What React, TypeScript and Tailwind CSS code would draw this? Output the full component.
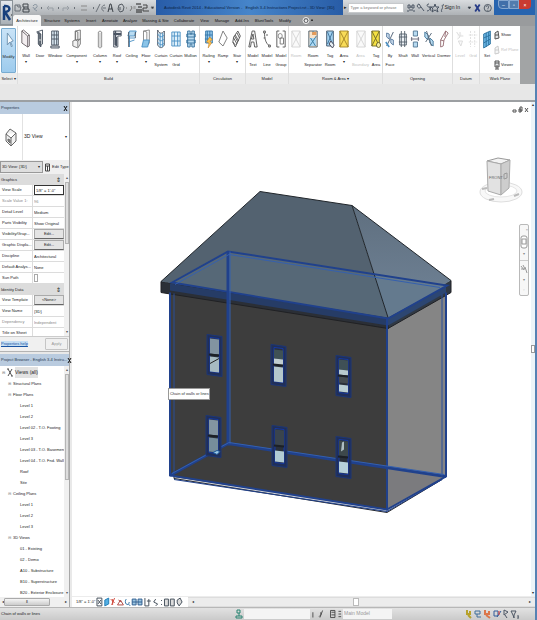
import { useState } from 'react'
import type { ReactNode } from 'react'
import clsx from 'clsx'

type Tool = {
  label: string
  icon: string
  width: string
  disabled?: boolean
  menu?: boolean
}

type Panel = { title: string; tools: Tool[]; className?: string }

const dark = '#4b5563'
const blue = '#4a90c4'
const pale = '#b9dcf2'

const toolIcons: Record<string, ReactNode> = {
  modify: <path d="M4 3v12l3-3 2 5 1-1-2-4 3-1z" fill="#f4f9fd" stroke="#6e93b0" />,
  wall: <path d="M1 2l7 5v11l-7-4zM8 7l2-1v11l-2 1M1 2l2-1 7 5" fill="#f3eef0" stroke="#6b6468" />,
  door: <><path d="M2 3l7-2v14l-3 2V4z" fill="#fff" stroke={dark} /><path d="M3 4l4 1v13l-3-3V5z" fill="#69717a" stroke={dark} /><path d="M5 11h2" stroke="#fff" /></>,
  window: <><path d="M1 17h10v2H1z" fill="#d1d5db" stroke={dark} /><path d="M2 2h8v14H2zM5 2v14M8 2v14M2 6h8M2 10h8" fill="#dcebf5" stroke={dark} /></>,
  component: <><path d="M4 2l6-1v14l-3 4-6-2v-5l3-1z" fill="#f2f2f2" stroke="#777" /><path d="M4 2v9l3 1v6M4 11l6-1M7 12l3-2M4 2l3 1v8" stroke="#777" fill="none" /></>,
  column: <><path d="M4 3l2-1 2 1v15l-2 1-2-1z" fill="#f5f5f5" stroke="#888" /><path d="M6 4v15" stroke="#bbb" /></>,
  roof: <><path d="M2 2h9v5H7v11H2z" fill="#e5e7eb" stroke={dark} /><path d="M4 2v14M2 5h9M5 8v9" stroke={dark} strokeWidth="2" /></>,
  ceiling: <><path d="M3 2h8l-2 5H1zM3 7v11M1 9h9M2 13l7-2" fill={pale} stroke={blue} /><path d="M2 3v15M10 3v6" stroke={dark} fill="none" /></>,
  floor: <><path d="M3 2l7-1v13l-3 3V3z" fill="#fff" stroke="#888" /><path d="M3 11h7l-2 7H1z" fill="#8bc4e8" stroke={blue} /><path d="M3 2v9" stroke="#888" /></>,
  curtain: <><path d="M2 1c2 4 5 4 8 1v14c-3 4-6 3-8 0z" fill="#e3f1fa" stroke={dark} /><path d="M2 5c3 4 5 3 8 1M2 9c3 4 5 3 8 1M2 13c3 4 5 3 8 1M5 4v14M8 4v14" fill="none" stroke={blue} /></>,
  grid: <path d="M1 3h10v14H1zM4 3v14M8 3v14M1 7h10M1 12h10" fill="#e4f3fc" stroke={blue} />,
  mullion: <path d="M2 2h3v3h2V2h3v16H7v-3H5v3H2zM1 5h10v3H1zM1 11h10v3H1z" fill={pale} stroke="#36719d" />,
  railing: <><path d="M2 2h8v12H2zM4 2v12M7 2v12M1 6h9M1 10h9" fill="#9acbed" stroke="#3275a8" /><path d="M7 8l3 3-3 1 2 2-4 5 1-5-3-1z" fill="#ffc34c" stroke="#c5822b" strokeWidth=".6" /></>,
  ramp: <path d="M6 2l5 7-5 8-5-4z" fill="#fff" stroke="#777" />,
  stair: <path d="M2 8l5-6 3 5-6 11-3-5zM4 6l4 6M6 4l3 5M2 9l4 6M1 13l3 3M3 7l4 6" fill="#fff" stroke="#555" />,
  text: <path d="M1 18L5 2h3l3 16H8l-1-5H4l-1 5zM4 10h3L6 5z" fill="#f7f7f7" stroke="#555" />,
  line: <><path d="M3 3c0 6 1 11 6 14" fill="none" stroke="#555" /><path d="M2 2h2v2H2zM8 16h2v2H8zM2 9h2M6 5v2" fill="#fff" stroke="#555" /></>,
  group: <><path d="M4 2H1v16h3M8 2h3v16H8" fill="none" stroke="#555" /><circle cx="5" cy="7" r="2.5" fill="none" stroke="#888" /><path d="M5 9h4v6H5z" fill="none" stroke="#777" /></>,
  room: <path d="M1 2h10v16H1zM1 2l10 16M11 2L1 18" fill="#f1f1f1" stroke="#777" />,
  separator: <><path d="M1 2h10v16H1z" fill="#f8e3ca" stroke="#4d5c68" /><path d="M2 9h8v8H2z" fill="#abd8f5" /><path d="M2 17l8-10M3 9l6 8M6 2v4" stroke="#38799e" /><path d="M5 3h5v3H5z" fill="#e59b58" /></>,
  tag: <><path d="M2 2h8v15H2z" fill="#a5d4f2" stroke="#44586b" /><path d="M3 3l6 12M9 3L3 15" stroke="#3a6d97" /><path d="M7 12l4 4-2 3-4-4z" fill="#e7f0f5" stroke="#445" /></>,
  area: <path d="M1 2h10v16H1zM1 2l10 16M11 2L1 18" fill="#f9dc58" stroke="#a48528" />,
  tagarea: <><path d="M1 2h9v15H1zM1 2l9 15M10 2L1 17" fill="#f5e142" stroke="#716a2b" /><circle cx="9" cy="16" r="2.5" fill="#f6eda0" stroke="#676230" /></>,
  byface: <><path d="M2 17L10 3" stroke="#4c5d72" /><path d="M2 4l3 1v5L2 8zM7 10l3 1v5l-3-2z" fill="#d6e6f5" stroke="#53779d" /><path d="M1 13l4 5" stroke={blue} strokeWidth="2" /></>,
  shaft: <path d="M2 5h8v11H2zM4 2v16M8 2v16M1 8h10M1 13h10" fill="#eef3f7" stroke="#55616c" />,
  opening: <><path d="M4 2h5v5H4zM4 13h5v5H4z" fill="#b8dbf1" stroke="#567995" /><path d="M1 10h10M2 8v4M10 8v4" stroke="#667" /></>,
  vertical: <><path d="M1 3l4 3v5L1 8zM7 9l4 3v5l-4-3z" fill="#b8dbf1" stroke="#45779a" /><path d="M2 13l7-9M3 2l6 15" stroke="#567" /></>,
  dormer: <path d="M2 18V11l6-9 3 2-5 7-1 6zM8 2L7 8M2 11l4 1" fill="#fff" stroke="#966d73" />,
  level: <path d="M2 3l4 5-3 2M4 12h5l-2 5zM6 3v4h4" fill="#f1f1f1" stroke="#888" />,
  gridline: <path d="M3 2v16M8 2v16M1 6h10M1 13h10" fill="none" stroke="#999" strokeDasharray="2 1" />,
  set: <path d="M2 5l8-3v13l-8 4zM5 4v14M8 3v13M2 9l8-3M2 14l8-4" fill="#6db8e7" stroke="#2c719e" />,
}

const panels: Panel[] = [
  {
    title: 'Build',
    className: 'px-px',
    tools: [
      { label: 'Wall', icon: 'wall', width: 'w-3.5', menu: true },
      { label: 'Door', icon: 'door', width: 'w-3.5' },
      { label: 'Window', icon: 'window', width: 'w-4' },
      { label: 'Component', icon: 'component', width: 'w-[27px]', menu: true },
      { label: 'Column', icon: 'column', width: 'w-5', menu: true },
      { label: 'Roof', icon: 'roof', width: 'w-3.5', menu: true },
      { label: 'Ceiling', icon: 'ceiling', width: 'w-[15px]' },
      { label: 'Floor', icon: 'floor', width: 'w-3.5', menu: true },
      { label: 'Curtain System', icon: 'curtain', width: 'w-4' },
      { label: 'Curtain Grid', icon: 'grid', width: 'w-3.5' },
      { label: 'Mullion', icon: 'mullion', width: 'w-[15px]' },
    ],
  },
  {
    title: 'Circulation',
    className: 'px-px',
    tools: [
      { label: 'Railing', icon: 'railing', width: 'w-[15px]', menu: true },
      { label: 'Ramp', icon: 'ramp', width: 'w-3.5' },
      { label: 'Stair', icon: 'stair', width: 'w-3.5', menu: true },
    ],
  },
  {
    title: 'Model',
    tools: [
      { label: 'Model Text', icon: 'text', width: 'w-3.5' },
      { label: 'Model Line', icon: 'line', width: 'w-3.5' },
      { label: 'Model Group', icon: 'group', width: 'w-3.5' },
    ],
  },
  {
    title: 'Room & Area ▾',
    tools: [
      { label: 'Room', icon: 'room', width: 'w-3.5', disabled: true },
      { label: 'Room Separator', icon: 'separator', width: 'w-5' },
      { label: 'Tag Room', icon: 'tag', width: 'w-3.5' },
      { label: 'Area', icon: 'area', width: 'w-3.5', menu: true },
      { label: 'Area Boundary', icon: 'room', width: 'w-[19px]', disabled: true },
      { label: 'Tag Area', icon: 'tagarea', width: 'w-3' },
    ],
  },
  {
    title: 'Opening',
    tools: [
      { label: 'By Face', icon: 'byface', width: 'w-3.5' },
      { label: 'Shaft', icon: 'shaft', width: 'w-3' },
      { label: 'Wall', icon: 'opening', width: 'w-3' },
      { label: 'Vertical', icon: 'vertical', width: 'w-[15px]' },
      { label: 'Dormer', icon: 'dormer', width: 'w-4' },
    ],
  },
  {
    title: 'Datum',
    tools: [
      { label: 'Level', icon: 'level', width: 'w-3.5', disabled: true },
      { label: 'Grid', icon: 'gridline', width: 'w-3', disabled: true },
    ],
  },
]

const tabs = [
  { label: 'Structure', width: 'w-5' },
  { label: 'Systems', width: 'w-5' },
  { label: 'Insert', width: 'w-[18px]' },
  { label: 'Annotate', width: 'w-5' },
  { label: 'Analyze', width: 'w-5' },
  { label: 'Massing & Site', width: 'w-[31px]' },
  { label: 'Collaborate', width: 'w-[26px]' },
  { label: 'View', width: 'w-[15px]' },
  { label: 'Manage', width: 'w-5' },
  { label: 'Add-Ins', width: 'w-5' },
  { label: 'BluntTools', width: 'w-6' },
  { label: 'Modify', width: 'w-[18px]' },
]

const tree = [
  { label: 'Structural Plans', depth: 1 },
  { label: 'Floor Plans', depth: 1 },
  { label: 'Level 1', depth: 2 },
  { label: 'Level 2', depth: 2 },
  { label: 'Level 02 - T.O. Footing', depth: 2 },
  { label: 'Level 3', depth: 2 },
  { label: 'Level 03 - T.O. Basement', depth: 2 },
  { label: 'Level 04 - T.O. Fnd. Wall', depth: 2 },
  { label: 'Roof', depth: 2 },
  { label: 'Site', depth: 2 },
  { label: 'Ceiling Plans', depth: 1 },
  { label: 'Level 1', depth: 2 },
  { label: 'Level 2', depth: 2 },
  { label: 'Level 3', depth: 2 },
  { label: '3D Views', depth: 1 },
  { label: '01 - Existing', depth: 2 },
  { label: '02 - Demo', depth: 2 },
  { label: 'A10 - Substructure', depth: 2 },
  { label: 'B10 - Superstructure', depth: 2 },
  { label: 'B20 - Exterior Enclosure', depth: 2 },
]

function ToolIcon({ name, className }: { name: string; className?: string }) {
  return (
    <svg viewBox="0 0 12 20" preserveAspectRatio="none" className={clsx('h-5 w-2.5 shrink-0', className)} fill="none" strokeWidth="1">
      {toolIcons[name]}
    </svg>
  )
}

function QuickAccess() {
  return (
    <svg viewBox="0 0 140 12" className="h-3 w-[140px] shrink-0" fill="none" stroke="#6b7178" aria-label="Quick access toolbar">
      <path d="M1 9V3h2l1 2h3l-1 4zM3 3h3v2" />
      <path d="M9 2h5v3H9zM9 7h6v3H9zM10 5v2M14 5v2" stroke="#41464d" />
      <path d="M19 4c2-3 5-1 4 1s-4 2-4 0M20 7l3 2" stroke="#8995a0" />
      <path d="M27 6h1M44 6h1M60 6h1M79 6h1M97 6h1" strokeWidth="2" />
      <path d="M35 4l-2 2 2 2M33 6h6v3M53 4l2 2-2 2M55 6h-6v3" stroke="#989ea5" />
      <path d="M67 4h6M67 8h6" stroke="#888" />
      <path d="M82 10l4-8M91 3c-4 0-4 6-1 6M89 6h3" />
      <path d="M94 10l2-8h1l2 8M95 7h3" stroke="#3f444a" />
      <path d="M105 3l3-1 2 3-1 4-3 1-2-3zM106 5v3" stroke="#555b62" />
      <path d="M112 6h1M117 4l1 2-2 3" stroke="#777" />
      <path d="M122 2h5M124 5h4M122 8h6M122 10h6" stroke="#222" />
      <path d="M120 4v3M121 4v3" stroke="#999" />
      <path d="M129 3h4v3h-4v3h6" stroke="#444" />
      <path d="M137 5h3l-1.500 2z" fill="#111" />
    </svg>
  )
}

function TitleBar() {
  return (
    <header className="flex h-[15px] items-center bg-linear-to-b from-[#d9dcdf] to-[#aeb2b6]">
      <span className="w-3.5 shrink-0" />
      <QuickAccess />
      <div className="ml-0.5 flex h-full min-w-0 flex-1 items-center overflow-hidden bg-linear-to-r from-[#285ca8] via-[#4685ca] to-[#285ca6]">
        <h1 className="pl-2 text-[4px] whitespace-nowrap text-[#0c2344]">
          Autodesk Revit 2014 - Educational Version - &nbsp; English 3-4 Instructions Project.rvt - 3D View: {'{3D}'}
        </h1>
      </div>
      <div className="flex h-full shrink-0 items-center">
        <span className="px-px text-[5px]">▸</span>
        <input
          aria-label="Search help"
          placeholder="Type a keyword or phrase"
          className="h-2.5 w-[56px] border border-[#c6c9cc] bg-white px-px text-[4px] outline-none placeholder:text-[#777]"
        />
        <svg viewBox="0 0 40 12" className="h-3 w-10" fill="none" stroke="#4b5563">
          <path d="M4 3h2v3H4zM8 3h2v3H8zM4 8v2M10 8v2M6 5h2M5 8h4" />
          <path d="M15 2a2 2 0 102 3l3 4M15 2l2 3" />
          <path d="M25 2c-3 0-2 3 0 3s1 4-2 4M26 4l1 5" />
          <path d="M31 2l1 3h3l-2 2 1 3-3-2-3 2 1-3-2-2h3z" />
          <path d="M38 10c-2-2 2-4 0-6 1-2 2-2 2 0" />
        </svg>
        <button className="text-[5px]">Sign In</button>
        <svg viewBox="0 0 38 12" className="h-3 w-[34px]" fill="none" stroke="#47515d">
          <path d="M9 5h3l-1.500 2z" fill="#222" />
          <path d="M17 2l5 8M22 2l-5 8" stroke="#273c87" strokeWidth="2" />
          <circle cx="31" cy="6" r="4" /><path d="M29 5c0-2 4-2 3 0l-1 2M31 8v1" />
        </svg>
        <div className="flex h-full items-start bg-[#2764af] px-1 text-[5px] leading-[9px] text-white">
          <button aria-label="Minimize" className="h-[9px] w-[11px] rounded-bl-sm border border-[#86a7cf] bg-[#416fa9] leading-[6px]">–</button>
          <button aria-label="Restore" className="h-[9px] w-[10px] border border-[#86a7cf] bg-[#527cae] leading-[6px]">▫</button>
          <button aria-label="Close" className="h-[9px] w-[12px] rounded-br-sm bg-[#c93b31] leading-[8px]">×</button>
        </div>
      </div>
    </header>
  )
}

function RibbonTabs() {
  return (
    <nav className="flex h-[11px] items-stretch bg-[#999b9d] pl-[13px] text-[4px]">
      <button className="mr-px w-7 shrink-0 rounded-t-[2px] bg-[#f7f7f7]">Architecture</button>
      {tabs.map((tab) => (
        <button key={tab.label} className={clsx('shrink-0 whitespace-nowrap text-[#111]', tab.width)}>
          {tab.label}
        </button>
      ))}
      <svg viewBox="0 0 12 11" className="ml-2 h-[11px] w-3" fill="none" stroke="#f3f3f3">
        <circle cx="4" cy="5.500" r="3" fill="#6b6d70" /><path d="M3 5h2l-1 2z" fill="#fff" /><path d="M9 5h2l-1 1z" stroke="#333" />
      </svg>
    </nav>
  )
}

function RibbonButton({ tool }: { tool: Tool }) {
  return (
    <button disabled={tool.disabled} className={clsx('flex shrink-0 flex-col items-center pt-[3px]', tool.width, tool.disabled && 'opacity-30')}>
      <ToolIcon name={tool.icon} />
      <span className="mt-0.5 text-center leading-[9px]">{tool.label}</span>
      {tool.menu && <span className="text-[4px] leading-[4px]">▾</span>}
    </button>
  )
}

function PanelTitle({ children }: { children: ReactNode }) {
  return <h2 className="mt-auto h-[11px] bg-[#ececec] text-center leading-[11px] whitespace-nowrap">{children}</h2>
}

function Ribbon() {
  return (
    <section className="flex h-[58px] bg-[#a2a4a5] text-[4px] text-[#222]">
      <div className="flex min-w-0 bg-white">
        <div className="flex w-[18px] shrink-0 flex-col border-r border-[#dedede]">
          <button className="mx-px mt-[2px] flex h-[45px] flex-col items-center rounded-[1px] border border-[#79abd0] bg-linear-to-b from-[#c9e3f7] to-[#9dcbed] pt-px">
            <ToolIcon name="modify" />
            <span className="mt-0.5 leading-[9px]">Modify</span>
          </button>
          <PanelTitle>Select ▾</PanelTitle>
        </div>
        {panels.map((panel) => (
          <div key={panel.title} className="flex shrink-0 flex-col border-r border-[#dedede]">
            <div className={clsx('flex flex-1', panel.className)}>
              {panel.tools.map((tool, i) => (
                <RibbonButton key={i} tool={tool} />
              ))}
            </div>
            <PanelTitle>{panel.title}</PanelTitle>
          </div>
        ))}
        <div className="flex shrink-0 flex-col">
          <div className="flex flex-1">
            <RibbonButton tool={{ label: 'Set', icon: 'set', width: 'w-3.5' }} />
            <div className="flex w-[26px] flex-col justify-around py-px">
              {['Show', 'Ref Plane', 'Viewer'].map((label, i) => (
                <button key={label} disabled={i === 1} className={clsx('flex items-center gap-px whitespace-nowrap', i === 1 && 'opacity-30')}>
                  <svg viewBox="0 0 6 10" className="h-2.5 w-1.5 shrink-0" fill="#e3e6e8" stroke="#555">
                    <path d={i === 2 ? 'M1 1h4v6H1zM1 3h4M3 5v4M1 9h4' : 'M1 3l3-2 1 7-4 1zM1 5h3'} />
                  </svg>
                  {label}
                </button>
              ))}
            </div>
          </div>
          <PanelTitle>Work Plane</PanelTitle>
        </div>
      </div>
    </section>
  )
}

function PaletteHeader({ title }: { title: string }) {
  return (
    <div className="flex h-3 shrink-0 items-center justify-between bg-[#b9cbdf] px-px text-[4px] text-[#26384c]">
      <h2 className="whitespace-nowrap">{title}</h2>
      <button aria-label={`Close ${title}`}>
        <svg viewBox="0 0 5 7" className="h-[7px] w-[5px]" stroke="#111"><path d="M1 1l3 5M4 1L1 6" /></svg>
      </button>
    </div>
  )
}

function PropertyRow({ label, id, muted, children }: { label: string; id: string; muted?: boolean; children: ReactNode }) {
  return (
    <div className={clsx('grid h-[11px] shrink-0 grid-cols-[1fr_1fr] items-center border-b border-[#dcdcdc]', muted && 'text-[#888]')}>
      <label htmlFor={id} className="pl-0.5 whitespace-nowrap">{label}</label>
      <div className="flex h-full min-w-0 items-center border-l border-[#dcdcdc] pl-px">{children}</div>
    </div>
  )
}

function TextValue({ id, value, boxed }: { id: string; value: string; boxed?: boolean }) {
  return <input id={id} defaultValue={value} className={clsx('h-full w-full min-w-0 bg-transparent outline-none', boxed && 'border border-[#333] px-px')} />
}

function EditValue({ id, children }: { id: string; children: ReactNode }) {
  return <button id={id} className="h-2.5 w-full border border-[#aaa] border-b-[#666] bg-[#e4e4e4] text-center leading-[8px]">{children}</button>
}

function GroupHeader({ children }: { children: ReactNode }) {
  return (
    <div className="flex h-[11px] shrink-0 items-center justify-between bg-[#dcdcdc] px-px">
      <h3>{children}</h3>
      <span className="pr-0.5 text-[6px] leading-none">⇕</span>
    </div>
  )
}

function ScrollBar({ thumb }: { thumb: string }) {
  return (
    <div className="flex w-[5px] shrink-0 flex-col items-center justify-between bg-[#f0f0f0] text-[4px] leading-[8px] text-[#555]">
      <span>▴</span>
      <div className={clsx('mb-auto w-1 border border-[#b5b5b5] bg-[#dedede]', thumb)} />
      <span>▾</span>
    </div>
  )
}

function Properties() {
  const [sunPath, setSunPath] = useState(false)
  return (
    <section className="flex h-[250px] shrink-0 flex-col border-b border-[#b3b3b3] text-[4px]">
      <PaletteHeader title="Properties" />
      <div className="flex h-[46px] shrink-0 items-center bg-white">
        <div className="flex h-full w-[23px] items-center justify-center border-r border-[#e2e2e2]">
          <svg viewBox="0 0 12 20" className="h-5 w-3" fill="#f0f0f0" stroke="#666">
            <path d="M1 7l4-5 6 4v8l-5 5-5-5zM1 7l5 4 5-5M6 11v8" />
            <path d="M3 12v2l2 2v-3z" fill="#999" />
          </svg>
        </div>
        <span className="flex-1 pl-px text-[5px]">3D View</span>
        <span className="pr-0.5">▾</span>
      </div>
      <div className="flex h-[14px] shrink-0 items-center bg-[#f0f0f0]">
        <div className="flex h-3 w-[43px] items-center border border-[#999] bg-[#dedede]">
          <select aria-label="View type" className="h-full w-full appearance-none bg-transparent pl-px">
            <option>3D View: {'{3D}'}</option>
          </select>
          <span className="pr-0.5">▾</span>
        </div>
        <button className="ml-0.5 flex items-center gap-0.5 whitespace-nowrap">
          <svg viewBox="0 0 5 9" className="h-[9px] w-[5px]" fill="#fff" stroke="#444"><path d="M.5 1h4v7h-4zM.5 3h4M2.500 3v5" /></svg>
          Edit Type
        </button>
      </div>
      <div className="flex min-h-0 flex-1 overflow-hidden bg-white">
        <div className="flex min-w-0 flex-1 flex-col overflow-hidden">
          <GroupHeader>Graphics</GroupHeader>
          <PropertyRow label="View Scale" id="scale"><TextValue id="scale" value={'1/8" = 1\'-0"'} boxed /></PropertyRow>
          <PropertyRow label="Scale Value  1:" id="scale-value" muted><TextValue id="scale-value" value="96" /></PropertyRow>
          <PropertyRow label="Detail Level" id="detail"><TextValue id="detail" value="Medium" /></PropertyRow>
          <PropertyRow label="Parts Visibility" id="parts"><TextValue id="parts" value="Show Original" /></PropertyRow>
          <PropertyRow label="Visibility/Grap..." id="visibility"><EditValue id="visibility">Edit...</EditValue></PropertyRow>
          <PropertyRow label="Graphic Displa..." id="display"><EditValue id="display">Edit...</EditValue></PropertyRow>
          <PropertyRow label="Discipline" id="discipline"><TextValue id="discipline" value="Architectural" /></PropertyRow>
          <PropertyRow label="Default Analys..." id="analysis"><TextValue id="analysis" value="None" /></PropertyRow>
          <PropertyRow label="Sun Path" id="sun">
            <input id="sun" type="checkbox" checked={sunPath} onChange={(e) => setSunPath(e.target.checked)} className="h-2 w-1 appearance-none border border-[#aaa] checked:bg-[#555]" />
          </PropertyRow>
          <GroupHeader>Identity Data</GroupHeader>
          <PropertyRow label="View Template" id="template"><EditValue id="template">{'<None>'}</EditValue></PropertyRow>
          <PropertyRow label="View Name" id="name"><TextValue id="name" value="{3D}" /></PropertyRow>
          <PropertyRow label="Dependency" id="dependency" muted><TextValue id="dependency" value="Independent" /></PropertyRow>
          <PropertyRow label="Title on Sheet" id="title"><TextValue id="title" value="" /></PropertyRow>
        </div>
        <ScrollBar thumb="h-[62px]" />
      </div>
      <div className="flex h-[15px] shrink-0 items-center justify-between border-t border-[#ccc] bg-[#f0f0f0] px-px">
        <a href="#help" className="bg-[#c5def3] text-[#1753a2] underline">Properties help</a>
        <button disabled className="h-3 w-[23px] rounded-[1px] border border-[#c5c5c5] text-[#999]">Apply</button>
      </div>
    </section>
  )
}

function ProjectBrowser() {
  return (
    <section className="flex min-h-0 flex-1 flex-col border-t-2 border-[#e8e8e8] text-[4px]">
      <PaletteHeader title="Project Browser - English 3-4 Instru..." />
      <div className="flex min-h-0 flex-1 bg-white">
        <ul className="min-w-0 flex-1 overflow-hidden pt-px leading-[11px] whitespace-nowrap">
          <li className="flex items-center gap-0.5 pl-0.5">
            <span className="text-[#777]">⊟</span>
            <svg viewBox="0 0 6 9" className="h-[9px] w-1.5" stroke="#555"><path d="M1 1l4 7M5 1L1 8M0 1h2M4 8h2" /></svg>
            <span className="bg-[#e2e2e2] text-[5px]">Views (all)</span>
          </li>
          {tree.map((item, i) => (
            <li key={i} className={clsx('flex', item.depth === 1 ? 'gap-0.5 pl-2' : 'pl-5')}>
              {item.depth === 1 && <span className="text-[#888]">{i === 0 ? '⊞' : '⊟'}</span>}
              {item.label}
            </li>
          ))}
        </ul>
        <ScrollBar thumb="h-[106px]" />
      </div>
      <div className="flex h-2.5 shrink-0 items-center justify-between bg-[#f0f0f0] px-0.5">
        <span>◂</span>
        <div className="h-2 w-[46px] rounded-[1px] border border-[#aaa] bg-linear-to-b from-[#f5f5f5] to-[#ccc] text-center leading-[6px]">⦀</div>
        <span className="ml-auto">▸</span>
      </div>
    </section>
  )
}

// glass lists the panes as [top offset, height, colour]
const houseWindows: { x: number; y: number; glass: [number, number, string][] }[] = [
  { x: 207, y: 335, glass: [[4, 15, '#8294a1'], [22, 15, '#a7bbc2']] },
  { x: 271, y: 345, glass: [[5, 9, '#3f5155'], [14, 6, '#c0cdd0'], [22, 15, '#b4c7cc']] },
  { x: 336, y: 356, glass: [[4, 10, '#3f5056'], [14, 5, '#b7c9cd'], [21, 6, '#454c50'], [29, 7, '#b9ced3']] },
  { x: 206, y: 416, glass: [[4, 15, '#8395a1'], [22, 14, '#768d9b']] },
  { x: 272, y: 426, glass: [[4, 16, '#3a444d'], [25, 11, '#b2cbd5']] },
  { x: 336, y: 437, glass: [[4, 15, '#3d484b'], [25, 11, '#b7d1d9']] },
]

function House() {
  return (
    <svg viewBox="72 104 459 491" className="h-full w-full" aria-label="3D view of the house">
      <defs>
        <linearGradient id="hip" x1="0" y1="0" x2="0" y2="1">
          <stop offset="0" stopColor="#5f6f7f" />
          <stop offset="1" stopColor="#718498" />
        </linearGradient>
      </defs>
      <path d="M174 479l213 34 55-33v-3l-55 32-213-32z" fill="#cfd2d7" stroke="#25272b" strokeWidth="1" />
      <path d="M170 292l217 34v184l-217-34z" fill="#3d3d3d" />
      <path d="M387 326l59-35v186l-59 33z" fill="#858585" />
      <path d="M388 467l58 10-59 33z" fill="#7b7b7e" />
      <path d="M161 282l227 36v11l-227-36z" fill="#2b2f36" stroke="#202124" />
      <path d="M170 284l218 35v7l-218-35z" fill="#263c66" />
      <path d="M388 318l63-37v12l-63 36z" fill="#303945" stroke="#202124" />
      <path d="M388 319l58-34v8l-58 33z" fill="#2c4672" />
      <path d="M260 192l92 14 36 112-227-36z" fill="#536270" />
      <path d="M352 206l99 75-63 37z" fill="url(#hip)" />
      <path d="M170 283l58-32 145 23 15 44z" fill="#566877" />
      <path d="M373 274l75 12-60 32z" fill="#647a8e" />
      <path d="M260 192l92 14 99 75M352 206l36 112M260 192l-99 90" fill="none" stroke="#20252a" />
      <g fill="none" stroke="#20418c">
        <path d="M172 283l56-31 219 34-59 33z" strokeWidth="2" />
        <path d="M228 252v194M170 476l58-32 218 33" strokeWidth="3" />
        <path d="M170 293v183l217 34 59-33V293" strokeWidth="2" />
        <path d="M387 319v192" strokeWidth="2" />
        <path d="M174 294v179M442 295v182" stroke="#2a4f97" />
        <path d="M174 480l213 32 55-32" strokeWidth="1" />
      </g>
      <g fill="none" stroke="#3560ae">
        <path d="M175 285l54-30 211 33M230 252v192M172 474l57-31 215 32" strokeWidth="1" />
      </g>
      {houseWindows.map((w) => (
        <g key={`${w.x}-${w.y}`} transform={`translate(${w.x} ${w.y})`}>
          <path d="M0 0l15 2v40l-15-2z" fill="#202f58" stroke="#1c3677" />
          <path d="M3 3l9 1v34l-9-1z" fill="#2a3039" stroke="#1539a5" />
          {w.glass.map(([y, h, color]) => (
            <path key={y} d={`M3 ${y}l9 1v${h}l-9-1z`} fill={color} />
          ))}
          <path d="M2 20l10 1" stroke="#1c2026" strokeWidth="2" />
        </g>
      ))}
      <path d="M210 364l9-5" stroke="#222" />
      <path d="M213 453l4-2 3 1-3 3z" fill="#9dc9e5" stroke="#1b5696" />
      <path d="M341 452l1-9 2-1v8z" fill="#aebdc1" />
    </svg>
  )
}

function ViewCube() {
  return (
    <svg viewBox="0 0 46 50" className="absolute top-[54px] right-1.5 h-[50px] w-[46px]" aria-label="View cube">
      <ellipse cx="22" cy="36" rx="21" ry="10" fill="#f8f8f8" stroke="#dedede" />
      <ellipse cx="22" cy="35" rx="16" ry="6" fill="#fff" stroke="#e5e5e5" />
      <path d="M3 33l5-1M10 44l5-1M35 40l5-2" stroke="#bbb" strokeWidth="2" />
      <path d="M8 5l11-3 12 2-9 4z" fill="#f3f3f3" stroke="#999" />
      <path d="M8 5l14 3v31l-13-4z" fill="#e2e2e2" stroke="#aaa" />
      <path d="M22 8l9-4-1 28-8 7z" fill="#cdcdcd" stroke="#aaa" />
      <text x="10" y="23" className="text-[4px]" fill="#666">FRONT</text>
      <path d="M25 18l3-1v5l-3 1z" fill="none" stroke="#999" />
    </svg>
  )
}

function NavigationBar() {
  return (
    <div className="absolute top-[122px] right-0.5 flex w-2.5 flex-col items-center rounded-[2px] border border-[#b9b9b9] bg-[#f7f7f7] text-[4px] text-[#888]">
      <button aria-label="Close navigation bar" className="ml-auto h-2.5">×</button>
      <button aria-label="Steering wheel" className="flex h-4 flex-col items-center">
        <svg viewBox="0 0 8 14" className="h-3.5 w-2" fill="#fff" stroke="#999"><rect x="1" y="1" width="6" height="12" rx="2" /><path d="M2 4h4v5H2z" /></svg>
      </button>
      <span className="h-2.5 w-full border-b border-[#ccc] text-center">▾</span>
      <button aria-label="Zoom" className="h-4">
        <svg viewBox="0 0 8 14" className="h-3.5 w-2" fill="none" stroke="#999"><path d="M1 4l3 4M3 3l2 4M5 5l2 6M1 7h4" /></svg>
      </button>
      <span className="h-2.5">▾</span>
      <span className="h-2">◦</span>
    </div>
  )
}

function ViewControls() {
  return (
    <div className="flex h-2.5 w-[116px] shrink-0 items-center overflow-hidden bg-white pl-1 text-[4px] whitespace-nowrap">
      <button className="w-5 shrink-0 text-left">{'1/8" = 1\'-0"'}</button>
      <svg viewBox="0 0 92 10" className="h-2.5 w-[90px] shrink-0" fill="none" stroke="#46515c">
        <path d="M1 1h5v8H1zM2 3l3 4M5 3L2 7" />
        <path d="M9 3l4-2v6l-4 2z" fill="#52aee3" stroke="#2680b7" />
        <path d="M15 2l4 4M19 1l-3 7M17 2v6" stroke="#cf493c" />
        <path d="M22 8l3-5 3 5zM23 3l3 2" stroke="#b04b45" />
        <path d="M31 2a2 3 0 103 3M33 7l2 2" stroke="#3677a8" />
        <path d="M37 2h4v6h-4zM43 2h4v6h-4zM37 5h10" stroke="#326091" fill="#9dc6e1" />
        <path d="M50 1v8h4V2M52 4h4M61 2l-2 3 4 2-2 2M67 3v1M67 7v1" />
        <path d="M70 2h4v7h-4zM76 2h4v7h-4zM83 3l3-2 2 4-3 4-2-3z" fill="#ddd" />
      </svg>
    </div>
  )
}

function Workspace() {
  return (
    <main className="flex min-w-0 flex-1 flex-col bg-white">
      <div className="relative flex min-h-0 flex-1">
        <div className="relative min-w-0 flex-1">
          <House />
          <ViewCube />
          <NavigationBar />
          <div role="tooltip" className="absolute top-[57.8%] left-[21%] flex h-3 w-[42px] items-center justify-center border border-[#999] bg-white text-[4px] whitespace-nowrap text-[#333]">
            Chain of walls or lines
          </div>
          <div className="absolute top-1 right-0.5 flex gap-px">
            <button aria-label="Minimize view"><svg viewBox="0 0 5 7" className="h-[7px] w-[5px]" fill="none" stroke="#555"><path d="M1 4h3v2H1z" /></svg></button>
            <button aria-label="Restore view"><svg viewBox="0 0 5 7" className="h-[7px] w-[5px]" fill="none" stroke="#555"><path d="M2 1h2v4H2zM1 3h2v3H1z" /></svg></button>
            <button aria-label="Close view"><svg viewBox="0 0 5 7" className="h-[7px] w-[5px]" fill="none" stroke="#555"><path d="M1 2l3 4M4 2L1 6" /></svg></button>
          </div>
        </div>
        <div className="flex w-1 shrink-0 flex-col items-center justify-between bg-[#edf4f8] text-[4px]">
          <span>▴</span>
          <div className="h-2 w-1 border border-[#999] bg-white" />
          <span>▾</span>
        </div>
      </div>
      <div className="flex h-[11px] shrink-0 items-center bg-[#ececec]">
        <ViewControls />
        <div className="flex flex-1 items-center border-y border-[#ddd] px-1 text-[4px]">
          <span>◂</span>
          <div className="ml-[47%] h-2 w-1.5 border border-[#bbb] bg-white" />
          <span className="ml-auto">▸</span>
        </div>
      </div>
    </main>
  )
}

function StatusBar() {
  return (
    <footer className="flex h-[13px] shrink-0 items-center border-t border-[#b7b7b7] bg-linear-to-b from-[#e2e2e2] to-[#cacaca] text-[4px]">
      <span className="w-[235px] pl-px">Chain of walls or lines</span>
      <svg viewBox="0 0 8 10" className="h-2.5 w-2" stroke="#288572" fill="none"><path d="M2 1h3v3H2zM4 4v3M1 7h6v2H1z" /></svg>
      <select aria-label="Active workset" className="ml-px h-2.5 w-[66px] appearance-none bg-[#f4f4f4]"><option></option></select>
      <svg viewBox="0 0 34 10" className="ml-0.5 h-2.5 w-[30px]" stroke="#444" fill="none">
        <path d="M1 9V3M10 3v3l-2 2M12 1l-3 8M21 1h5v8h-5zM22 3h4M22 6h4M30 2h3M30 5h3M30 8h3" />
      </svg>
      <select aria-label="Design option" className="ml-px h-2.5 w-[49px] appearance-none bg-[#f4f4f4] pl-px text-[5px] text-[#999]"><option>Main Model</option></select>
      <svg viewBox="0 0 54 10" className="mr-4 ml-auto h-2.5 w-[54px]" stroke="#4b5563" fill="none">
        <path d="M2 1v4h3V2M3 6l3 3" stroke="#b7a22c" strokeWidth="2" />
        <path d="M10 2h5v3h-5zM12 5v3h4" stroke="#3e6e9b" />
        <path d="M20 1v4h4V2M21 6l4 3" stroke="#dc774b" strokeWidth="2" />
        <path d="M29 2h4v5h-4zM32 8l4-6" stroke="#325c9b" />
        <path d="M34 2v4" stroke="#e73f37" /><path d="M39 1v5l4-3zM40 6l2 3M46 2h5l-2 4v3l-1-3zM52 7h2v2h-2" />
      </svg>
    </footer>
  )
}

export default function App() {
  return (
    <div className="flex h-screen flex-col overflow-hidden border-r-2 border-[#5682b3] bg-[#e9e9e9] font-['Liberation_Sans',Arial,sans-serif] text-[#222]">
      <div className="relative">
        <TitleBar />
        <RibbonTabs />
        <button aria-label="Application menu" className="absolute top-0 left-0 flex h-[25px] w-[13px] items-center justify-center border border-[#8a9299] bg-linear-to-b from-[#e5e9ee] to-[#aab0b6]">
          <svg viewBox="0 0 10 20" className="h-5 w-2.5" fill="none" stroke="#173f7c" strokeWidth="2.500">
            <path d="M2 3v14M2 3c7-1 7 6 1 6l5 8" /><path d="M9 12h1" stroke="#333" strokeWidth="1" />
          </svg>
        </button>
      </div>
      <Ribbon />
      <div className="h-[18px] shrink-0 border-b-2 border-[#9c9fa2] bg-[#e7e7e7]" />
      <div className="flex min-h-0 flex-1">
        <aside className="mr-0.5 flex w-[70px] shrink-0 flex-col border-r border-[#a8a8a8] bg-[#f0f0f0]">
          <Properties />
          <ProjectBrowser />
        </aside>
        <Workspace />
      </div>
      <StatusBar />
    </div>
  )
}
